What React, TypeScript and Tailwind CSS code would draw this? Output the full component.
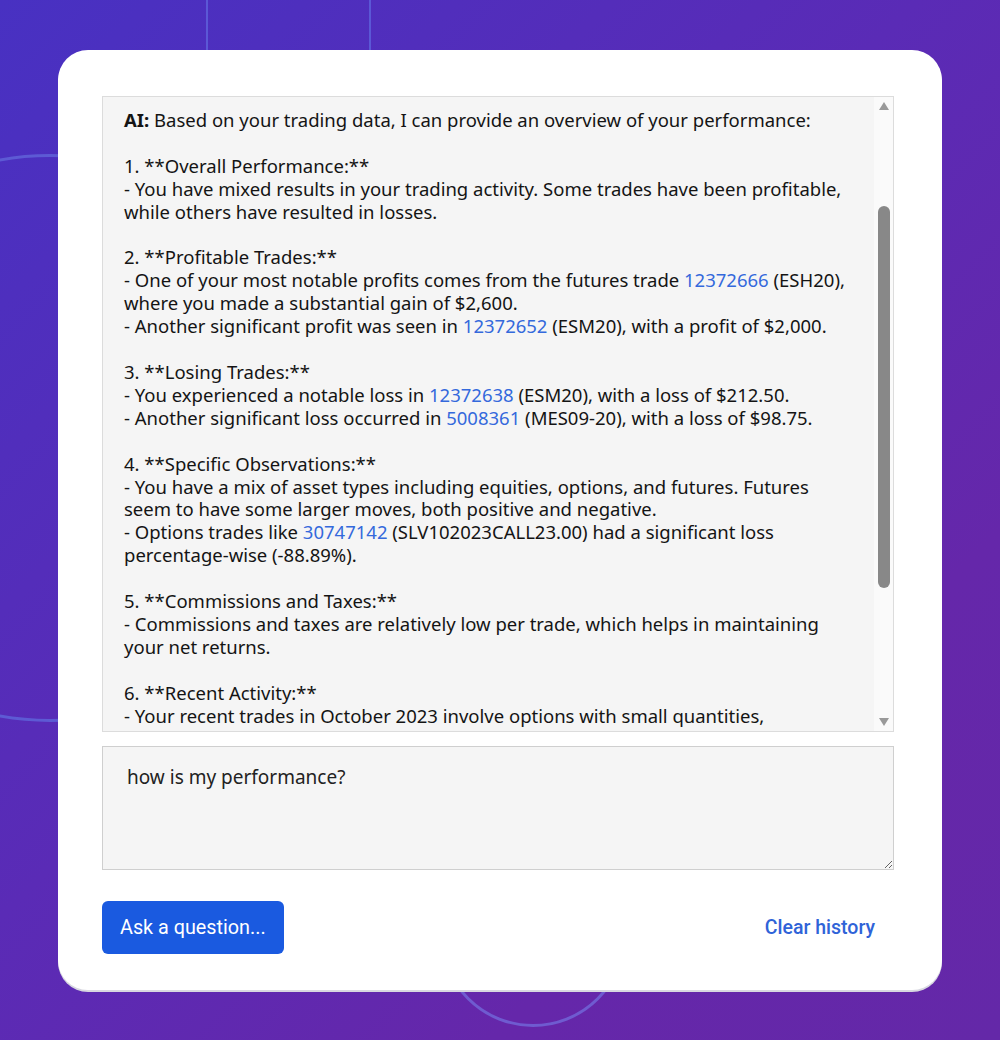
import React from "react";

type Seg = { t: string; link?: boolean; bold?: boolean };

const lines: Seg[][] = [
  [{ t: "AI:", bold: true }, { t: " Based on your trading data, I can provide an overview of your performance:" }],
  [],
  [{ t: "1. **Overall Performance:**" }],
  [{ t: "- You have mixed results in your trading activity. Some trades have been profitable," }],
  [{ t: "while others have resulted in losses." }],
  [],
  [{ t: "2. **Profitable Trades:**" }],
  [{ t: "- One of your most notable profits comes from the futures trade " }, { t: "12372666", link: true }, { t: " (ESH20)," }],
  [{ t: "where you made a substantial gain of $2,600." }],
  [{ t: "- Another significant profit was seen in " }, { t: "12372652", link: true }, { t: " (ESM20), with a profit of $2,000." }],
  [],
  [{ t: "3. **Losing Trades:**" }],
  [{ t: "- You experienced a notable loss in " }, { t: "12372638", link: true }, { t: " (ESM20), with a loss of $212.50." }],
  [{ t: "- Another significant loss occurred in " }, { t: "5008361", link: true }, { t: " (MES09-20), with a loss of $98.75." }],
  [],
  [{ t: "4. **Specific Observations:**" }],
  [{ t: "- You have a mix of asset types including equities, options, and futures. Futures" }],
  [{ t: "seem to have some larger moves, both positive and negative." }],
  [{ t: "- Options trades like " }, { t: "30747142", link: true }, { t: " (SLV102023CALL23.00) had a significant loss" }],
  [{ t: "percentage-wise (-88.89%)." }],
  [],
  [{ t: "5. **Commissions and Taxes:**" }],
  [{ t: "- Commissions and taxes are relatively low per trade, which helps in maintaining" }],
  [{ t: "your net returns." }],
  [],
  [{ t: "6. **Recent Activity:**" }],
  [{ t: "- Your recent trades in October 2023 involve options with small quantities," }],
];

function Line({ segs }: { segs: Seg[] }) {
  if (segs.length === 0) return <div className="h-[22.92px]" />;
  return (
    <div className="h-[22.92px] whitespace-nowrap">
      {segs.map((s, i) => (
        <span
          key={i}
          className={s.link ? "text-[#3469dc]" : s.bold ? "font-bold" : ""}
        >
          {s.t}
        </span>
      ))}
    </div>
  );
}

function FakeScrollbar() {
  return (
    <div className="flex w-[19px] shrink-0 flex-col items-center bg-[#fafafa] py-[5px]">
      <div className="h-0 w-0 border-x-[5px] border-b-[8px] border-x-transparent border-b-[#999]" />
      <div className="mt-[96px] h-[382px] w-[12px] rounded-full bg-[#888]" />
      <div className="flex-1" />
      <div className="h-0 w-0 border-x-[5px] border-t-[8px] border-x-transparent border-t-[#999]" />
    </div>
  );
}

export default function App() {
  return (
    <div className="relative h-[1040px] w-full overflow-hidden bg-[linear-gradient(135deg,#4831c2_0%,#5a2bb6_45%,#6527aa_75%,#6428a8_100%)]">
      {/* background ornaments */}
      <div className="absolute left-[206px] top-[-20px] h-[120px] w-[165px] border-x-2 border-[#5b58d6]" />
      <div className="absolute left-[-234px] top-[154px] h-[568px] w-[568px] rounded-full border-[3px] border-[#5d5ad4]" />
      <div className="absolute left-[440px] top-[841px] h-[186px] w-[186px] rounded-full border-[3px] border-[#6f5bd0]" />

      <div className="relative ml-[58px] mt-[50px] flex h-[940px] w-[884px] flex-col rounded-[30px] bg-white pl-[44px] pr-[48px] pt-[46px] shadow-[0_2px_0_#d8d8e0]">
        <div className="flex h-[636px] overflow-hidden border border-[#dcdcdc] bg-[#f5f5f5]">
          <div className="flex-1 overflow-hidden pl-[21px] pt-[11px] font-['Segoe_UI','Noto_Sans',sans-serif] text-[18.5px] leading-[23px] text-[#141414]">
            {lines.map((l, i) => (
              <Line key={i} segs={l} />
            ))}
          </div>
          <FakeScrollbar />
        </div>

        <textarea
          className="mt-[14px] h-[124px] w-full resize-y border border-[#cfcfcf] bg-[#f5f5f5] px-[24px] pt-[18px] font-['Segoe_UI','Noto_Sans',sans-serif] text-[19px] leading-[24px] text-[#222] outline-none"
          defaultValue="how is my performance?"
        />

        <div className="mt-[31px] flex items-center justify-between">
          <button className="h-[53px] rounded-[6px] bg-[#1a5ae0] px-[18px] font-['Roboto',sans-serif] text-[19.8px] text-white">
            Ask a question...
          </button>
          <button className="mr-[19px] font-['Roboto',sans-serif] text-[19.5px] font-medium text-[#2f63d8]">
            Clear history
          </button>
        </div>
      </div>
    </div>
  );
}
